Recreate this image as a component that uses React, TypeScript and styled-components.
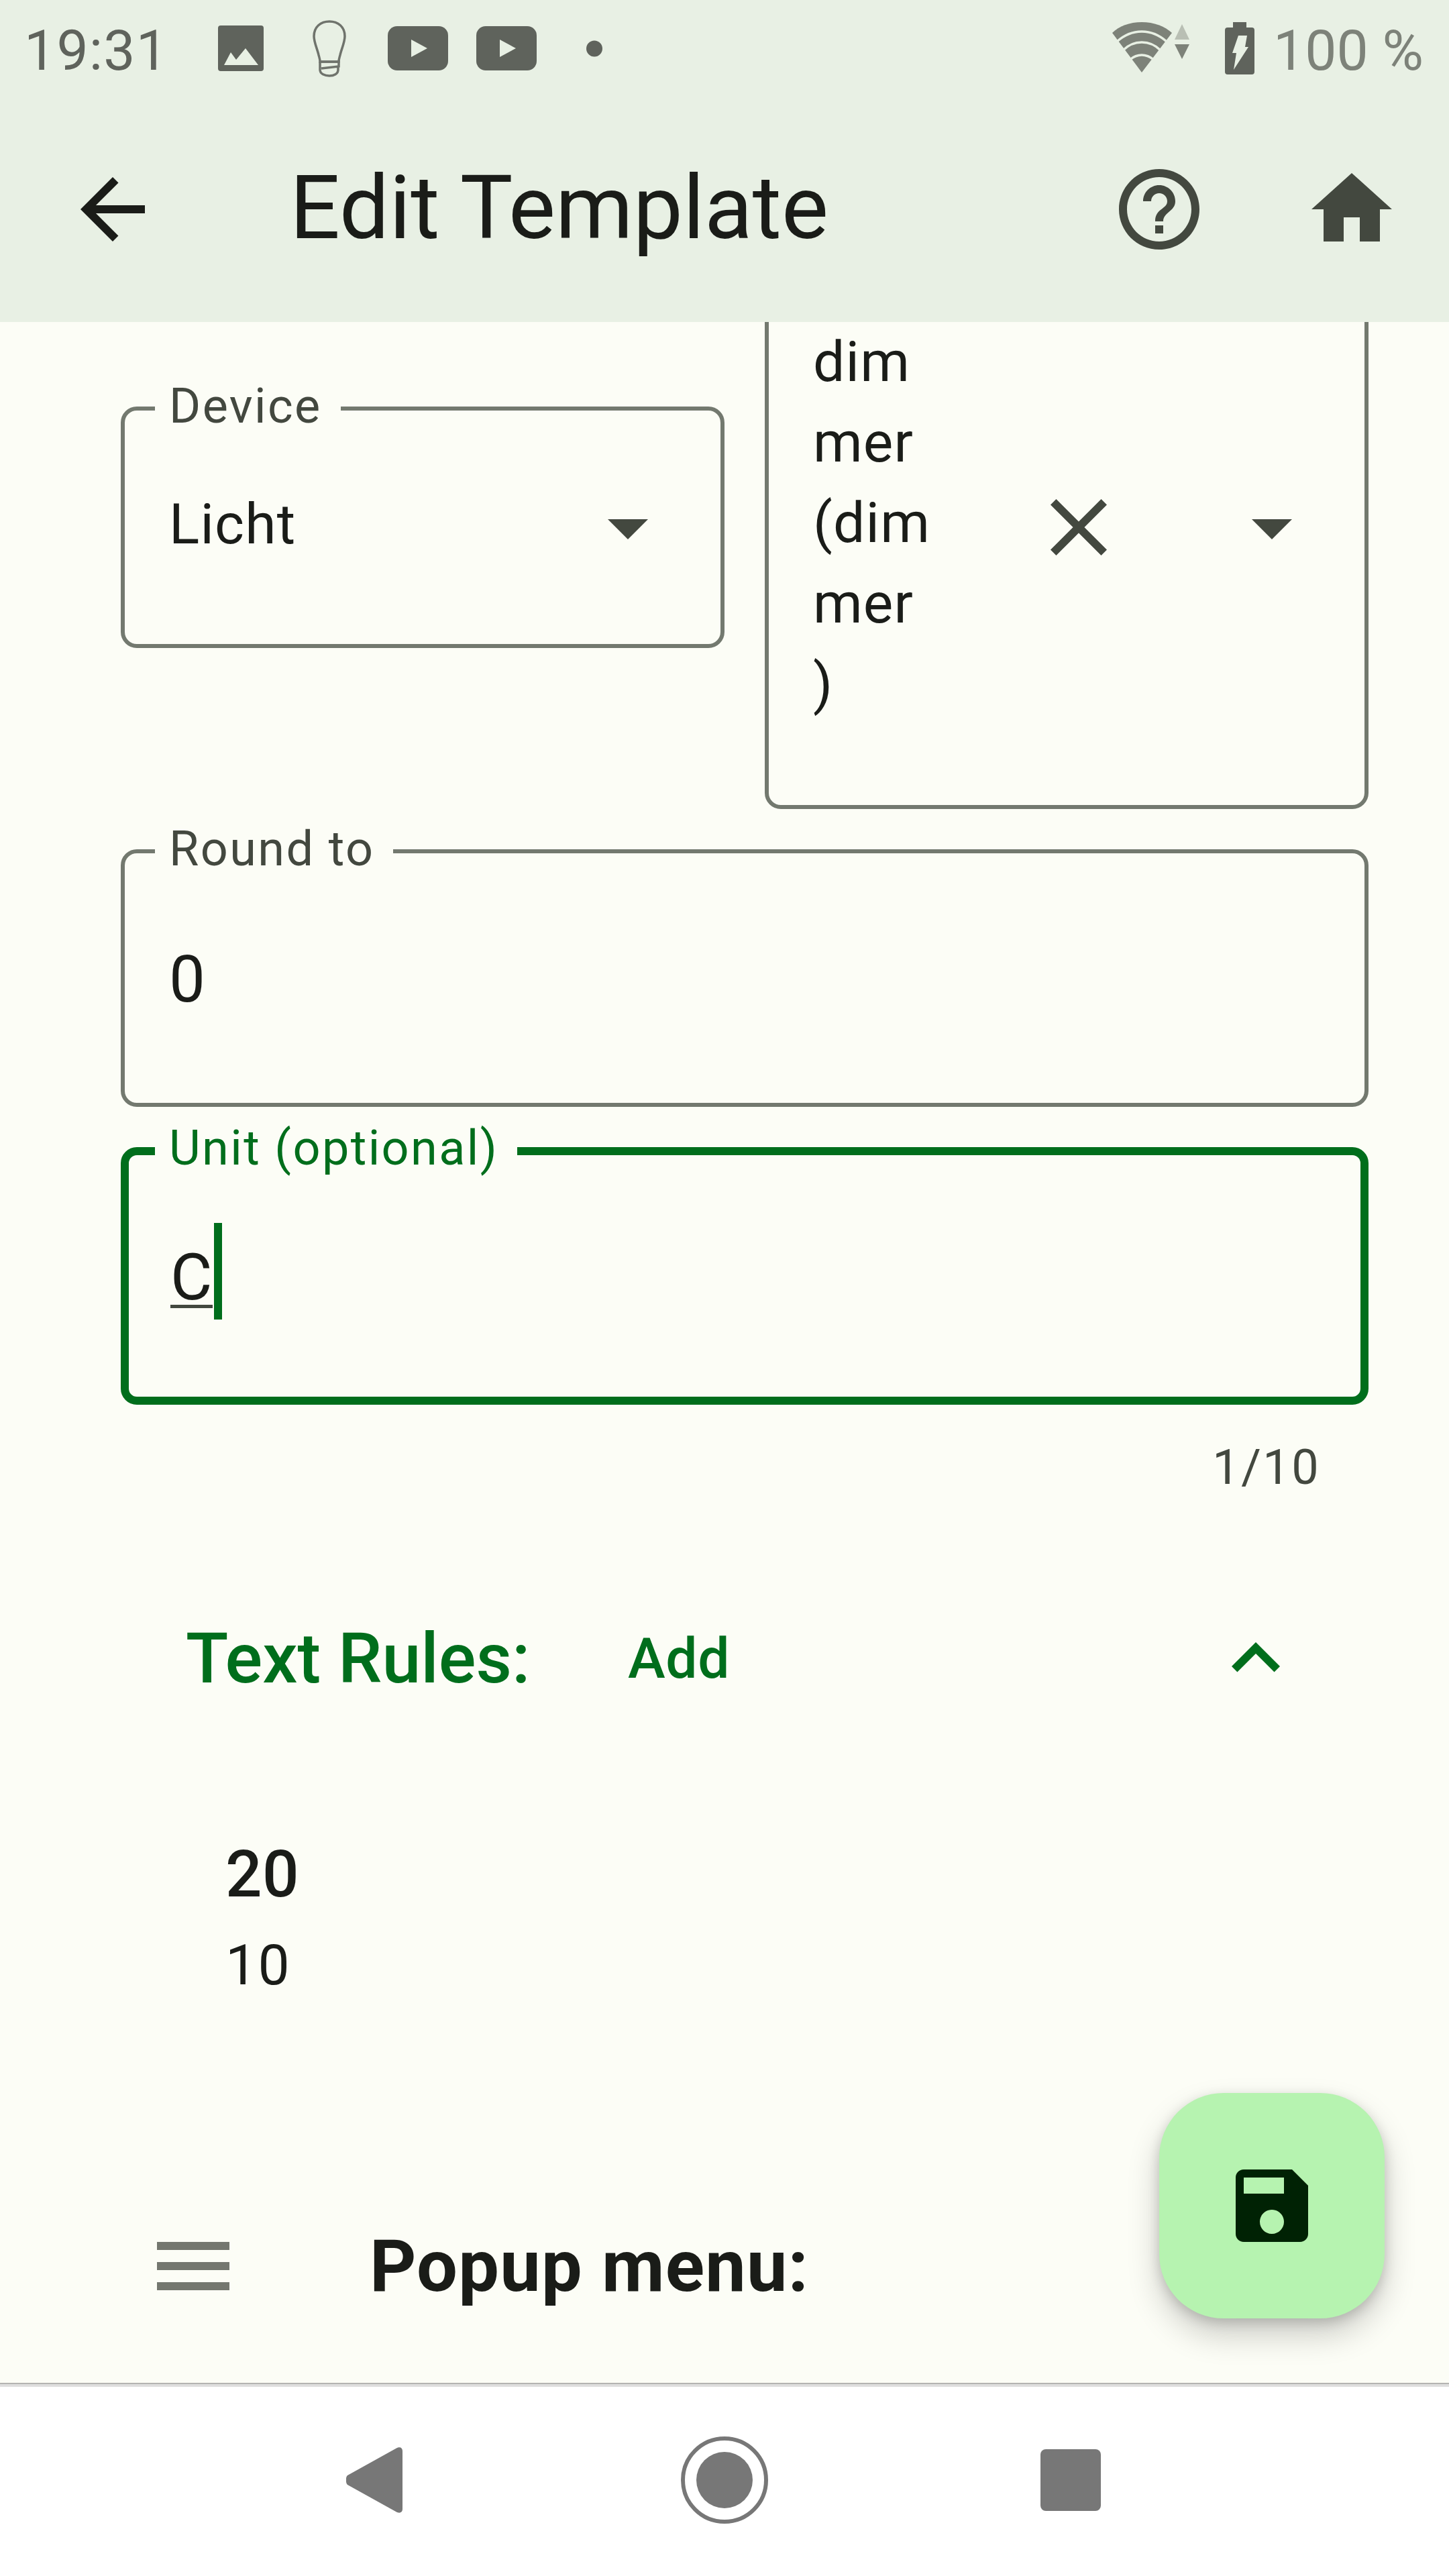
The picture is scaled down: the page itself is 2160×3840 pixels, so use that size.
import React from "react";
import styled, { createGlobalStyle } from "styled-components";

const GlobalStyle = createGlobalStyle`
  html, body {
    margin: 0;
    padding: 0;
    background: #fcfdf6;
  }
  body {
    font-family: Roboto, "Liberation Sans", sans-serif;
    color: #1a1c18;
  }
`;

const Screen = styled("div")`
  width: 2160px;
  height: 3840px;
  display: flex;
  flex-direction: column;
  position: relative;
  overflow: hidden;
  background: #fcfdf6;
`;

const StatusBar = styled("div")`
  height: 144px;
  flex: none;
  display: flex;
  align-items: center;
  justify-content: space-between;
  background: #e8f0e4;
  padding: 0 38px 0 36px;
`;

const StatusGroup = styled("div")`
  display: flex;
  align-items: center;
`;

const StatusText = styled("span")<{ $light?: boolean }>`
  font-size: 84px;
  line-height: 136px;
  padding-top: 8px;
  margin-left: ${(p) => (p.$light ? 28 : 0)}px;
  letter-spacing: ${(p) => (p.$light ? 0 : 1.2)}px;
  color: ${(p) => (p.$light ? "#7d8279" : "#5f635c")};
`;

const Glyph = styled("svg")<{ $left?: number }>`
  display: block;
  flex: none;
  margin-left: ${(p) => p.$left ?? 0}px;
`;

const Toolbar = styled("div")`
  height: 336px;
  flex: none;
  display: flex;
  align-items: center;
  background: #e8f0e4;
  padding: 0 73px 0 96px;
  position: relative;
  z-index: 1;
`;

const ToolbarTitle = styled("h1")`
  flex: 1;
  margin: 0 0 4px 192px;
  font-size: 132px;
  font-weight: 400;
  color: #1a1c18;
  line-height: 168px;
`;

const ToolbarIcon = styled("svg")<{ $action?: boolean; $gap?: number }>`
  display: block;
  flex: none;
  width: 144px;
  height: 144px;
  fill: ${(p) => (p.$action ? "#43483f" : "#1a1c18")};
  margin-left: ${(p) => p.$gap ?? 0}px;
`;

const ScrollArea = styled("main")`
  flex: 1;
  min-height: 0;
  overflow: hidden;
`;

const ScrollContent = styled("div")`
  margin-top: -114px;
  padding: 0 120px 0 180px;
  display: flex;
  flex-direction: column;
`;

const DeviceRow = styled("div")`
  display: grid;
  grid-template-columns: 900px 900px;
  column-gap: 60px;
  align-items: center;
`;

const FieldBox = styled("div")<{ $focused?: boolean; $height?: number }>`
  position: relative;
  box-sizing: border-box;
  height: ${(p) => p.$height ?? 384}px;
  border: ${(p) => (p.$focused ? "12px solid #006e1c" : "6px solid #73796f")};
  border-radius: 24px;
  display: flex;
  align-items: center;
  padding-left: ${(p) => (p.$focused ? 62 : 66)}px;
`;

const FieldLabel = styled("label")<{ $focused?: boolean }>`
  position: absolute;
  top: ${(p) => (p.$focused ? -50 : -46)}px;
  left: ${(p) => (p.$focused ? 39 : 45)}px;
  padding: 0 28px 0 21px;
  background: #fcfdf6;
  font-size: 72px;
  line-height: 80px;
  letter-spacing: 2.4px;
  white-space: nowrap;
  color: ${(p) => (p.$focused ? "#006e1c" : "#43483f")};
`;

const SelectValue = styled("span")<{ $wrap?: boolean }>`
  font-size: 84px;
  line-height: 120px;
  margin-bottom: ${(p) => (p.$wrap ? 12 : 9)}px;
  color: #1a1c18;
  width: ${(p) => (p.$wrap ? "210px" : "auto")};
  flex: ${(p) => (p.$wrap ? "none" : "1")};
  letter-spacing: 1.2px;
`;

const FieldIcon = styled("svg")<{ $left?: number; $right?: number }>`
  display: block;
  flex: none;
  width: 144px;
  height: 144px;
  fill: #43483f;
  margin-left: ${(p) => p.$left ?? 0}px;
  margin-right: ${(p) => p.$right ?? 0}px;
`;

const TextRow = styled("div")`
  margin-top: 60px;
`;

const InputValue = styled("span")`
  font-size: 96px;
  line-height: 120px;
  padding-top: 4px;
  letter-spacing: 0.5px;
  color: #1a1c18;
`;

const ComposingValue = styled(InputValue)`
  text-decoration: underline;
  text-decoration-thickness: 5px;
  text-underline-offset: 8px;
  text-decoration-color: #43483f;
`;

const Caret = styled("span")`
  display: block;
  width: 12px;
  height: 144px;
  margin: 0 0 14px 2px;
  background: #006e1c;
`;

const Helper = styled("div")`
  text-align: right;
  margin: 52px 72px 0 0;
  font-size: 72px;
  line-height: 84px;
  letter-spacing: 2.4px;
  color: #43483f;
`;

const SectionHeader = styled("div")`
  display: flex;
  align-items: center;
  margin: 170px 0 0 97px;
  height: 144px;
`;

const SectionTitle = styled("span")`
  font-size: 104px;
  font-weight: 500;
  color: #006e1c;
  width: 659px;
  flex: none;
`;

const AddButton = styled("span")`
  flex: 1;
  font-size: 84px;
  font-weight: 500;
  letter-spacing: 0.6px;
  color: #006e1c;
`;

const Chevron = styled("svg")`
  display: block;
  flex: none;
  width: 144px;
  height: 144px;
  fill: #006e1c;
  margin-right: 96px;
`;

const RuleItem = styled("div")`
  margin: 208px 0 0 156px;
  display: flex;
  flex-direction: column;
  gap: 52px;
`;

const RuleTitle = styled("span")`
  font-size: 96px;
  line-height: 84px;
  font-weight: 500;
  letter-spacing: 0.5px;
`;

const RuleText = styled("span")`
  font-size: 84px;
  line-height: 84px;
  letter-spacing: 1.2px;
`;

const PopupRow = styled("div")`
  display: flex;
  align-items: center;
  margin: 334px 0 0 36px;
`;

const PopupIcon = styled("svg")`
  display: block;
  flex: none;
  width: 144px;
  height: 144px;
  fill: #74776f;
`;

const PopupTitle = styled("span")`
  margin-left: 191px;
  font-size: 108px;
  font-weight: 700;
  line-height: 144px;
  letter-spacing: 1.2px;
`;

const SaveButton = styled("button")`
  position: absolute;
  left: 1728px;
  top: 3120px;
  width: 336px;
  height: 336px;
  padding: 0;
  border: none;
  border-radius: 96px;
  background: #b6f3b0;
  display: flex;
  align-items: center;
  justify-content: center;
  box-shadow: 0 24px 48px rgba(0, 0, 0, 0.2), 0 6px 18px rgba(0, 0, 0, 0.16);
  z-index: 2;
`;

const SaveIcon = styled("svg")`
  display: block;
  width: 144px;
  height: 144px;
  fill: #002204;
`;

const NavBar = styled("nav")`
  height: 288px;
  flex: none;
  box-sizing: border-box;
  background: #ffffff;
  border-top: 2px solid #b4b4b2;
  box-shadow: inset 0 4px 0 #dedede;
  padding-right: 3px;
  display: flex;
  align-items: center;
  justify-content: center;
  position: relative;
  z-index: 1;
`;

const NavGlyph = styled("svg")<{ $left?: number }>`
  display: block;
  flex: none;
  fill: #777777;
  margin-left: ${(p) => p.$left ?? 0}px;
`;

function ImageIcon() {
  return (
    <Glyph $left={74} width="68" height="68" viewBox="0 0 68 68">
      <rect width="68" height="68" rx="4" fill="#5f635c" />
      <path d="M9 59L19 40l8 11 14-17 19 25z" fill="#e8f0e4" />
    </Glyph>
  );
}

function BulbIcon() {
  return (
    <Glyph $left={73} width="50" height="85" viewBox="0 0 50 85" fill="none" stroke="#6f736c" strokeWidth="3.5">
      <path d="M25 2C12 2 2 10 2 24c0 9 5 19 7 28 1 4 2 6 2 10h28c0-4 1-6 2-10 2-9 7-19 7-28C48 10 38 2 25 2z" />
      <path d="M11 62h28v7l-26 3M11 62v12c0 6 7 9 14 9s13-3 13-9v-6" />
    </Glyph>
  );
}

function PlayBadge({ left }: { left: number }) {
  return (
    <Glyph $left={left} width="90" height="66" viewBox="0 0 90 66">
      <rect width="90" height="66" rx="14" fill="#5f635c" />
      <path d="M35 20l24 13-24 13z" fill="#e8f0e4" />
    </Glyph>
  );
}

function WifiIcon() {
  return (
    <Glyph width="118" height="78" viewBox="0 0 118 78">
      <path fill="#7d8279" d="M46 75L2 16C12 6 28 0 46 0s34 6 45 16z" />
      <path
        fill="none"
        stroke="#e8f0e4"
        strokeWidth="3.5"
        d="M9 29c10-9 23-15 37-15s27 6 37 15M18 42c7-7 17-12 28-12s21 5 28 12M28 56c5-4 11-7 18-7s13 3 18 7"
      />
      <path fill="#b9bfb4" d="M106 3l11 23H95z" />
      <path fill="#7d8279" d="M95 33h22l-11 22z" />
    </Glyph>
  );
}

function BatteryIcon() {
  return (
    <Glyph $left={52} width="44" height="78" viewBox="0 0 44 78">
      <path
        fill="#5f635c"
        fillRule="evenodd"
        d="M12 0h20v8h8a4 4 0 0 1 4 4v62a4 4 0 0 1-4 4H4a4 4 0 0 1-4-4V12a4 4 0 0 1 4-4h8zM20 20h13l-3 17h5L13 71l4-25h-6z"
      />
    </Glyph>
  );
}

export default function App() {
  return (
    <>
      <GlobalStyle />
      <Screen>
        <StatusBar>
          <StatusGroup>
            <StatusText>19:31</StatusText>
            <ImageIcon />
            <BulbIcon />
            <PlayBadge left={62} />
            <PlayBadge left={42} />
            <Glyph $left={74} width="24" height="25" viewBox="0 0 24 25">
              <circle cx="12" cy="12.5" r="12" fill="#5f635c" />
            </Glyph>
          </StatusGroup>
          <StatusGroup>
            <WifiIcon />
            <BatteryIcon />
            <StatusText $light>100 %</StatusText>
          </StatusGroup>
        </StatusBar>
        <Toolbar>
          <ToolbarIcon viewBox="0 0 24 24">
            <path d="M20 11H7.83l5.59-5.59L12 4l-8 8 8 8 1.41-1.41L7.83 13H20v-2z" />
          </ToolbarIcon>
          <ToolbarTitle>Edit Template</ToolbarTitle>
          <ToolbarIcon $action viewBox="0 0 24 24">
            <path d="M11 18h2v-2h-2v2zm1-16C6.48 2 2 6.48 2 12s4.48 10 10 10 10-4.48 10-10S17.52 2 12 2zm0 18c-4.41 0-8-3.59-8-8s3.59-8 8-8 8 3.59 8 8-3.59 8-8 8zm0-14c-2.21 0-4 1.79-4 4h2c0-1.1.9-2 2-2s2 .9 2 2c0 2-3 1.75-3 5h2c0-2.25 3-2.5 3-5 0-2.21-1.79-4-4-4z" />
          </ToolbarIcon>
          <ToolbarIcon $action $gap={143} viewBox="0 0 24 24">
            <path d="M10 20v-6h4v6h5v-8h3L12 3 2 12h3v8z" />
          </ToolbarIcon>
        </Toolbar>
        <ScrollArea>
          <ScrollContent>
            <DeviceRow>
              <FieldBox $height={360}>
                <FieldLabel>Device</FieldLabel>
                <SelectValue>Licht</SelectValue>
                <FieldIcon $right={66} viewBox="0 0 24 24">
                  <path d="M7 10l5 5 5-5z" />
                </FieldIcon>
              </FieldBox>
              <FieldBox $height={840}>
                <SelectValue $wrap>
                  dim
                  <br />
                  mer
                  <br />
                  (dim
                  <br />
                  mer
                  <br />)
                </SelectValue>
                <FieldIcon $left={114} viewBox="0 0 24 24">
                  <path d="M19 6.41L17.59 5 12 10.59 6.41 5 5 6.41 10.59 12 5 17.59 6.41 19 12 13.41 17.59 19 19 17.59 13.41 12z" />
                </FieldIcon>
                <FieldIcon $left={144} viewBox="0 0 24 24">
                  <path d="M7 10l5 5 5-5z" />
                </FieldIcon>
              </FieldBox>
            </DeviceRow>
            <TextRow>
              <FieldBox>
                <FieldLabel>Round to</FieldLabel>
                <InputValue>0</InputValue>
              </FieldBox>
            </TextRow>
            <TextRow>
              <FieldBox $focused>
                <FieldLabel $focused>Unit (optional)</FieldLabel>
                <ComposingValue>C</ComposingValue>
                <Caret />
              </FieldBox>
            </TextRow>
            <Helper>1/10</Helper>
            <SectionHeader>
              <SectionTitle>Text Rules:</SectionTitle>
              <AddButton>Add</AddButton>
              <Chevron viewBox="0 0 24 24">
                <path d="M12 8l-6 6 1.41 1.41L12 10.83l4.59 4.58L18 14z" />
              </Chevron>
            </SectionHeader>
            <RuleItem>
              <RuleTitle>20</RuleTitle>
              <RuleText>10</RuleText>
            </RuleItem>
            <PopupRow>
              <PopupIcon viewBox="0 0 24 24">
                <path d="M3 18h18v-2H3v2zm0-5h18v-2H3v2zm0-7v2h18V6H3z" />
              </PopupIcon>
              <PopupTitle>Popup menu:</PopupTitle>
            </PopupRow>
          </ScrollContent>
        </ScrollArea>
        <SaveButton>
          <SaveIcon viewBox="0 0 24 24">
            <path d="M17 3H5c-1.11 0-2 .9-2 2v14c0 1.1.89 2 2 2h14c1.1 0 2-.9 2-2V7l-4-4zm-5 16c-1.66 0-3-1.34-3-3s1.34-3 3-3 3 1.34 3 3-1.34 3-3 3zm3-10H5V5h10v4z" />
          </SaveIcon>
        </SaveButton>
        <NavBar>
          <NavGlyph width="84" height="98" viewBox="0 0 84 98">
            <path d="M2 42L74 2c5-3 10-2 10 4v86c0 6-5 7-10 4L2 56c-3-3-3-11 0-14z" />
          </NavGlyph>
          <NavGlyph $left={415} width="130" height="132" viewBox="0 0 130 132">
            <circle cx="65" cy="66" r="62" fill="none" stroke="#777777" strokeWidth="6" />
            <circle cx="65" cy="66" r="42" />
          </NavGlyph>
          <NavGlyph $left={406} width="90" height="92" viewBox="0 0 90 92">
            <rect width="90" height="92" rx="8" />
          </NavGlyph>
        </NavBar>
      </Screen>
    </>
  );
}
